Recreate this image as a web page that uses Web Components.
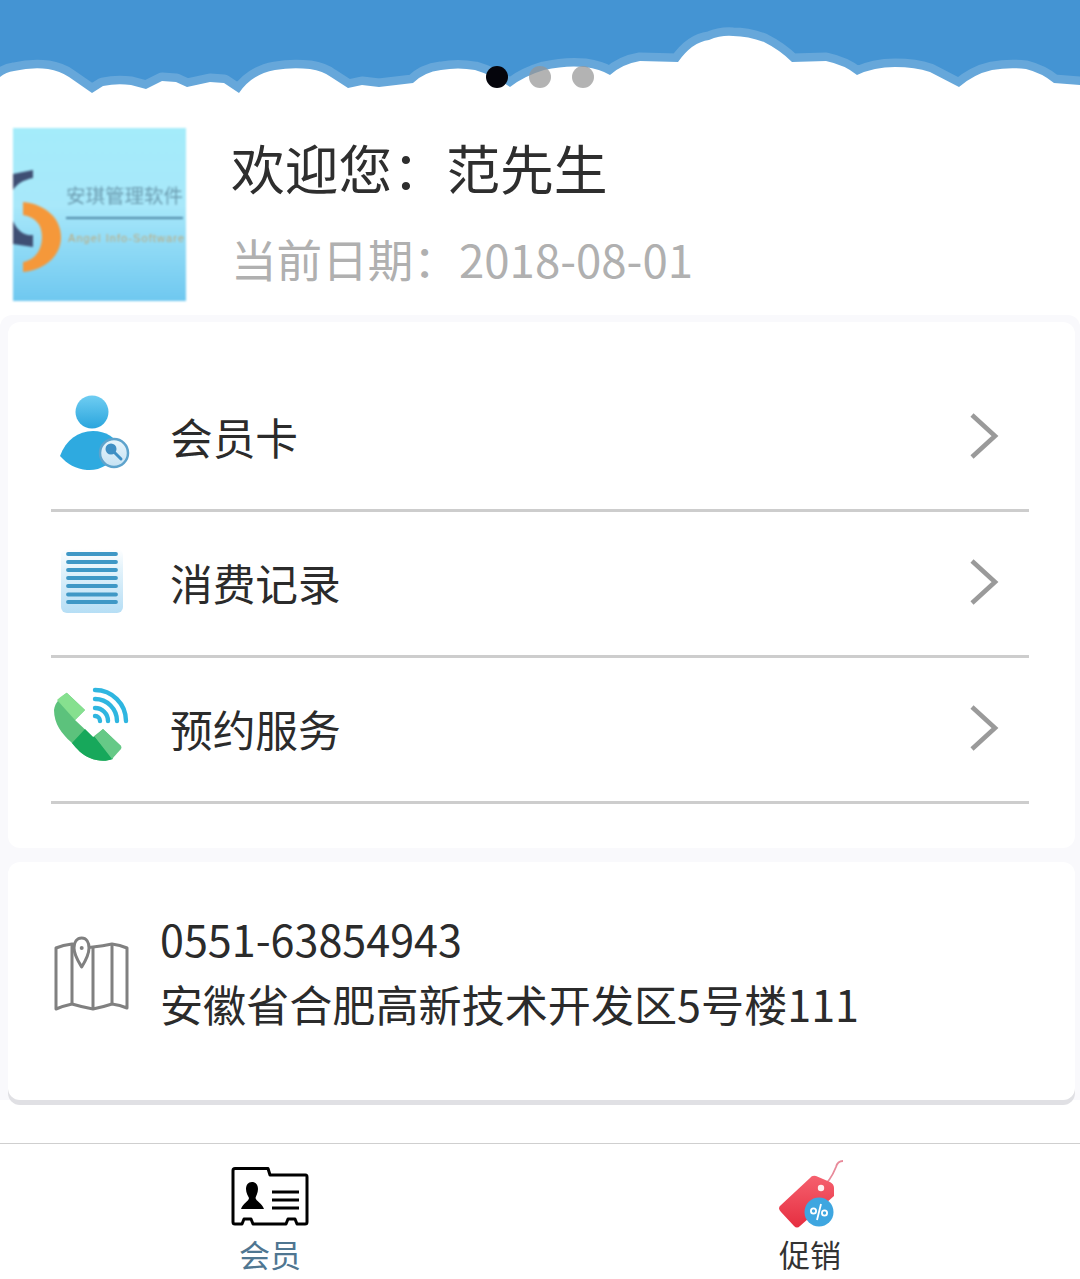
<!DOCTYPE html>
<html lang="zh">
<head>
<meta charset="utf-8">
<title>会员</title>
<style>
  html, body { margin: 0; padding: 0; background: #fff; }
  body { font-family: "Noto Sans CJK SC", "Noto Sans", sans-serif; color: #333; }
  svg { display: block; overflow: visible; }
</style>
</head>
<body>
<member-page>
  <app-banner></app-banner>
  <user-profile name="欢迎您：范先生" date="当前日期：2018-08-01"></user-profile>
  <card-list>
    <menu-card>
      <menu-row label="会员卡">
        <svg slot="icon" width="80" height="80" viewBox="0 0 80 80">
          <defs>
            <linearGradient id="a" x1="0" y1="0" x2="0" y2="1"><stop offset="0" stop-color="#6fcdf2"/><stop offset="1" stop-color="#2aa5dd"/></linearGradient>
            <linearGradient id="b" x1="0" y1="0" x2="0" y2="1"><stop offset="0" stop-color="#e8f5fc"/><stop offset="1" stop-color="#c6e2f3"/></linearGradient>
          </defs>
          <circle cx="41" cy="15" r="16.5" fill="url(#a)"/>
          <path d="M9 59C15 43 27 34 42 34C55 34 64 40 71 52C60 68 48 74 36 73C25 72 16 67 9 59Z" fill="#2eaae0"/>
          <circle cx="63" cy="56" r="14" fill="url(#b)" stroke="#5ea3cc" stroke-width="2.5"/>
          <circle cx="60" cy="52" r="5.5" fill="#3f8fc4"/>
          <path d="M63 55L70 62" stroke="#3f8fc4" stroke-width="3" stroke-linecap="round"/>
        </svg>
      </menu-row>
      <menu-row label="消费记录">
        <svg slot="icon" width="80" height="80" viewBox="0 0 80 80">
          <defs><linearGradient id="c" x1="0" y1="0" x2="0" y2="1"><stop offset="0" stop-color="#fff"/><stop offset=".3" stop-color="#e4f3fb"/><stop offset="1" stop-color="#b6def5"/></linearGradient></defs>
          <rect x="10" y="6" width="62" height="64" rx="6" fill="url(#c)"/>
          <g stroke="#3f98c6" stroke-width="3.8" stroke-linecap="round">
            <path d="M17 11H65M17 19H65M17 27H65M17 35H65M17 43H65M17 51.5H65M17 59H65"/>
          </g>
        </svg>
      </menu-row>
      <menu-row label="预约服务">
        <svg slot="icon" width="80" height="80" viewBox="0 0 80 80">
          <path d="M15.7 3.7L34 21L24 31L42 48L52 40L70 57L61 70C55 73 46 72 39 69C30 65 26 60 20 53C11 45 3 35 3 21C4 13 10 8 15.7 3.7Z" fill="#5cc27c"/>
          <path d="M15.7 3.7L34 21L24 31L6 11C9 8 12 6 15.7 3.7Z" fill="#86e08f"/>
          <path d="M21 54L34 40L42 48L44 48L62 70C54 73 46 72 39 69C31 66 26 60 21 54Z" fill="#17a85b"/>
          <path d="M52 40L70 57Q71 58 70 60L61 70L44 48Z" fill="#66c987"/>
          <g fill="none" stroke="#2fb6e0" stroke-width="4.4" stroke-linecap="round">
            <path d="M44 1A31 31 0 0 1 75 32"/>
            <path d="M44 10A22 22 0 0 1 66 32"/>
            <path d="M44 19A13 13 0 0 1 57 32"/>
            <path d="M44 27A5 5 0 0 1 49 32"/>
          </g>
        </svg>
      </menu-row>
    </menu-card>
    <contact-card phone="0551-63854943" address="安徽省合肥高新技术开发区5号楼111">
      <svg slot="icon" width="80" height="80" viewBox="0 0 80 80" fill="none" stroke="#808080" stroke-width="3" stroke-linejoin="round">
        <path d="M5 13Q12 10 21 9Q31 13 42 12Q52 11 61 9Q69 10 76 13V73Q69 70 61 69Q52 72 42 74Q31 72 21 69Q12 71 5 74Z"/>
        <path d="M21 9V69M42 12V74M61 9V69"/>
        <path d="M30.7 32C27 26 23 20 23 13C23 7 26 3 30.7 3C35.4 3 38 7 38 13C38 20 34.4 26 30.7 32Z" fill="#fff"/>
        <circle cx="30.7" cy="13" r="2" fill="#808080" stroke="none"/>
      </svg>
    </contact-card>
  </card-list>
  <tab-bar>
    <tab-item label="会员" color="#4f7691">
      <svg slot="icon" style="margin-bottom:5px" width="76" height="60" viewBox="0 0 76 60">
        <path d="M3 1.5H36L38 8H73.5Q75 8 75 10V55Q75 57 73 57H65L63 52H56L54 57H21L19 52H12L10 57H3Q1 57 1 55V3.5Q1 1.5 3 1.5Z" fill="#fff" stroke="#000" stroke-width="3" stroke-linejoin="round"/>
        <path d="M20 15C24 15 26 18 26 22C26 26 24 29 23.5 31C24 34 30 36 32 42H9C11 36 17 34 17 31C16 29 14 26 14 22C14 18 16 15 20 15Z" fill="#000"/>
        <path d="M40 25H67M40 33H67M40 41H67" stroke="#000" stroke-width="3"/>
      </svg>
    </tab-item>
    <tab-item label="促销" color="#333">
      <svg slot="icon" width="76" height="80" viewBox="0 0 76 80">
        <defs><linearGradient id="d" x1="0" y1="0" x2="0" y2="1"><stop offset="0" stop-color="#f5606e"/><stop offset="1" stop-color="#e62e40"/></linearGradient></defs>
        <path d="M49 36C58 30 62 20 64 15C65 11 68 9 71 9" fill="none" stroke="#e88a9a" stroke-width="1.8"/>
        <path d="M38 26Q40 23 44 24L58 30Q62 32 62 36L62 44L28 74Q25 77 22 74L9 60Q5 56 9 53Z" fill="url(#d)"/>
        <circle cx="49" cy="36" r="3.2" fill="#fdeff0"/>
        <circle cx="47" cy="60" r="14.5" fill="#3ea6e0"/>
        <g fill="none" stroke="#fff" stroke-width="1.8">
          <circle cx="41.5" cy="59" r="2.6"/>
          <circle cx="52.5" cy="61" r="2.6"/>
          <path d="M49 52L45 68"/>
        </g>
      </svg>
    </tab-item>
  </tab-bar>
</member-page>

<script>
  // small helper, every element below just sets its markup in an open shadow root
  function shadow(el, html) {
    el.attachShadow({ mode: "open" }).innerHTML = html;
  }

  class MemberPage extends HTMLElement {
    constructor() {
      super();
      shadow(this, `
        <style>
          :host { display: flex; flex-direction: column; width: 1080px; height: 1279px; overflow: hidden; }
        </style>
        <slot></slot>`);
    }
  }

  class AppBanner extends HTMLElement {
    constructor() {
      super();
      shadow(this, `
        <style>
          :host { display: block; position: relative; height: 118px; background: #fff; }
          svg { display: block; }
          .dots { position: absolute; left: 486px; top: 66px; display: flex; gap: 21px; }
          .dots i { width: 22px; height: 22px; border-radius: 50%; background: rgba(150,150,150,.72); }
          .dots i:first-child { background: #05050c; }
        </style>
        <svg width="1080" height="118" viewBox="0 0 1080 118">
          <rect width="1080" height="118" fill="#fff"/>
          <rect width="1080" height="100" fill="#4494d3"/>
          <path d="M0 77Q6 72 14 71Q32 67 48 69Q60 71 69 77L92 93L103 86Q117 83 131 85L146 89L162 81L176 82L187 87L210 82L224 83L239 93Q252 74 275 70Q292 67 310 69Q323 71 331 77L348 88L362 85L379 87L413 83Q424 72 441 70Q458 67 475 70Q495 76 510 87Q524 76 544 70Q566 65 585 67Q600 69 610 75Q622 64 640 61L678 62Q692 42 709 40Q721 35 733 36Q748 36 764 42Q780 50 792 62L826 61Q845 65 857 75Q874 67 895 67Q915 67 930 72L959 87Q974 74 992 70Q1009 67 1026 69Q1042 73 1054 83L1080 85V118H0Z"
            fill="#fff" stroke="#66a7da" stroke-width="17" stroke-linejoin="round" paint-order="stroke"/>
        </svg>
        <div class="dots"><i></i><i></i><i></i></div>`);
    }
  }

  class UserProfile extends HTMLElement {
    constructor() {
      super();
      shadow(this, `
        <style>
          :host { display: flex; align-items: flex-start; gap: 45px; height: 197px; padding: 10px 0 0 13px; box-sizing: border-box; }
          .logo { flex: none; width: 173px; height: 173px; background: linear-gradient(180deg, #a4ecfa, #a8e8fa 45%, #6fc8f0); filter: blur(.8px); }
          .text { display: flex; flex-direction: column; margin-top: -3px; }
          .name { font-size: 53.8px; line-height: 84px; height: 84px; color: #2e2e2e; white-space: nowrap; }
          .date { font-size: 45.6px; line-height: 60px; margin-top: 19px; color: #b0b0b0; white-space: nowrap; }
        </style>
        <div class="logo">
          <svg width="173" height="173" viewBox="0 0 173 173">
            <path d="M0 46L20 42V50C10 52 4 56 0 62Z" fill="#3f4f74"/>
            <path d="M0 93C5 104 12 108 20 107V119L0 116Z" fill="#3f4f74"/>
            <path d="M10 74C32 76 48 90 48 109C48 128 32 142 10 144L10 134C22 132 29 122 29 109C29 96 22 89 10 87Z" fill="#f5983a"/>
            <text x="53" y="75" font-size="19.5" fill="#6c9cb0" font-family="Liberation Serif, Noto Sans CJK SC, serif" textLength="117">安琪管理软件</text>
            <rect x="53" y="89" width="117" height="2" fill="#4d86a4"/>
            <text x="55" y="114" font-size="11" fill="#c0a878" font-family="Liberation Sans, sans-serif" textLength="116">Angel Info-Software</text>
          </svg>
        </div>
        <div class="text">
          <div class="name">${this.getAttribute("name")}</div>
          <div class="date">${this.getAttribute("date")}</div>
        </div>`);
    }
  }

  class CardList extends HTMLElement {
    constructor() {
      super();
      shadow(this, `
        <style>
          :host { display: flex; flex-direction: column; gap: 14px; height: 785px; padding: 7px 5px 0 8px; box-sizing: border-box; background: #f9f9fc; border-radius: 12px 12px 0 0; }
        </style>
        <slot></slot>`);
    }
  }

  class MenuCard extends HTMLElement {
    constructor() {
      super();
      shadow(this, `
        <style>
          :host { display: block; height: 526px; padding-top: 44px; box-sizing: border-box; background: #fff; border-radius: 12px; }
        </style>
        <slot></slot>`);
    }
  }

  class MenuRow extends HTMLElement {
    constructor() {
      super();
      shadow(this, `
        <style>
          :host { display: flex; align-items: center; height: 146px; margin: 0 46px 0 43px; padding-bottom: 4px; box-sizing: border-box; border-bottom: 3px solid #cdcdcd; }
          .icon { flex: none; width: 119px; padding-top: 3px; }
          .label { flex: 1; font-size: 42.7px; color: #2b2b2b; white-space: nowrap; }
          .arrow { flex: none; margin-right: 30px; }
        </style>
        <div class="icon"><slot name="icon"></slot></div>
        <div class="label">${this.getAttribute("label")}</div>
        <svg class="arrow" width="30" height="48" viewBox="0 0 30 48"><path d="M3 3L26 24L3 45" fill="none" stroke="#9a9a9a" stroke-width="4.6"/></svg>`);
    }
  }

  class ContactCard extends HTMLElement {
    constructor() {
      super();
      shadow(this, `
        <style>
          :host { display: flex; align-items: center; height: 238px; padding: 0 0 20px 43px; box-sizing: border-box; background: #fff; border-radius: 12px; box-shadow: 0 5px 0 #e0e0e4; }
          .icon { flex: none; width: 109px; margin-top: 8px; }
          .lines { font-size: 43.1px; line-height: 65px; color: #2b2b2b; white-space: nowrap; }
        </style>
        <div class="icon"><slot name="icon"></slot></div>
        <div class="lines">
          <div>${this.getAttribute("phone")}</div>
          <div>${this.getAttribute("address")}</div>
        </div>`);
    }
  }

  class TabBar extends HTMLElement {
    constructor() {
      super();
      shadow(this, `
        <style>
          :host { display: grid; grid-template-columns: 1fr 1fr; margin-top: 43px; height: 136px; box-sizing: border-box; border-top: 1px solid #cfcfcf; background: #fff; }
        </style>
        <slot></slot>`);
    }
  }

  class TabItem extends HTMLElement {
    constructor() {
      super();
      shadow(this, `
        <style>
          :host { display: flex; flex-direction: column; align-items: center; justify-content: flex-end; padding-bottom: 3px; box-sizing: border-box; }
          .label { font-size: 31px; line-height: 44px; white-space: nowrap; color: ${this.getAttribute("color")}; }
        </style>
        <slot name="icon"></slot>
        <div class="label">${this.getAttribute("label")}</div>`);
    }
  }

  customElements.define("member-page", MemberPage);
  customElements.define("app-banner", AppBanner);
  customElements.define("user-profile", UserProfile);
  customElements.define("card-list", CardList);
  customElements.define("menu-card", MenuCard);
  customElements.define("menu-row", MenuRow);
  customElements.define("contact-card", ContactCard);
  customElements.define("tab-bar", TabBar);
  customElements.define("tab-item", TabItem);
</script>
</body>
</html>
